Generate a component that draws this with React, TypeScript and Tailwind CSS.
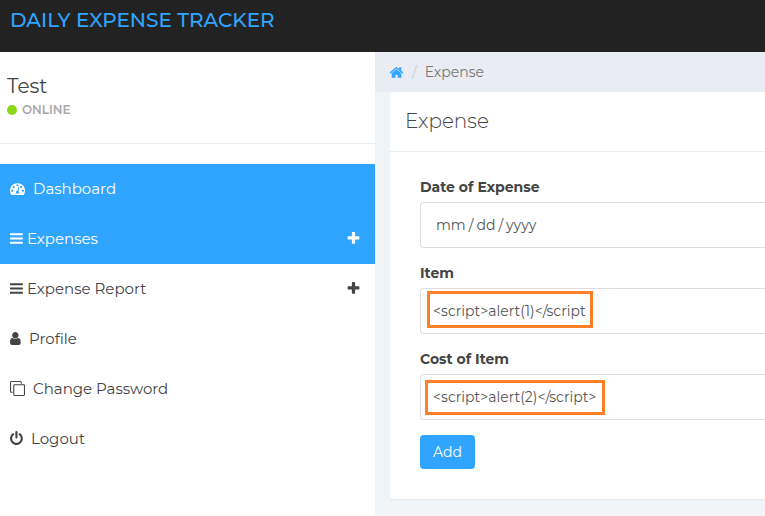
import React from "react";

const icons = {
  dashboard:
    "M384 1152q0-53-37.5-90.5t-90.5-37.5-90.5 37.5-37.5 90.5 37.5 90.5 90.5 37.5 90.5-37.5 37.5-90.5zm192-448q0-53-37.5-90.5t-90.5-37.5-90.5 37.5-37.5 90.5 37.5 90.5 90.5 37.5 90.5-37.5 37.5-90.5zm428 481l101-382q6-26-7.5-48.5t-38.5-29.5-48 6.5-30 39.5l-101 382q-60 5-107 43.5t-63 98.5q-20 77 20 146t117 89 146-20 89-117q16-60-6-117t-72-91zm660-33q0-53-37.5-90.5t-90.5-37.5-90.5 37.5-37.5 90.5 37.5 90.5 90.5 37.5 90.5-37.5 37.5-90.5zm-640-640q0-53-37.5-90.5t-90.5-37.5-90.5 37.5-37.5 90.5 37.5 90.5 90.5 37.5 90.5-37.5 37.5-90.5zm448 192q0-53-37.5-90.5t-90.5-37.5-90.5 37.5-37.5 90.5 37.5 90.5 90.5 37.5 90.5-37.5 37.5-90.5zm320 448q0 261-141 483-19 29-54 29h-1402q-35 0-54-29-141-221-141-483 0-182 71-348t191-286 286-191 348-71 348 71 286 191 191 286 71 348z",
  bars:
    "M1536 1344v128q0 26-19 45t-45 19h-1408q-26 0-45-19t-19-45v-128q0-26 19-45t45-19h1408q26 0 45 19t19 45zm0-512v128q0 26-19 45t-45 19h-1408q-26 0-45-19t-19-45v-128q0-26 19-45t45-19h1408q26 0 45 19t19 45zm0-512v128q0 26-19 45t-45 19h-1408q-26 0-45-19t-19-45v-128q0-26 19-45t45-19h1408q26 0 45 19t19 45z",
  user:
    "M1280 1399q0 109-62.5 187t-150.5 78h-854q-88 0-150.5-78t-62.5-187q0-85 8.5-160.5t31.5-152 58.5-131 94-89 134.5-34.5q131 128 313 128t313-128q76 0 134.5 34.5t94 89 58.5 131 31.5 152 8.5 160.5zm-256-887q0 159-112.5 271.5t-271.5 112.5-271.5-112.5-112.5-271.5 112.5-271.5 271.5-112.5 271.5 112.5 112.5 271.5z",
  clone:
    "M1664 1632v-1088q0-13-9.5-22.5t-22.5-9.5h-1088q-13 0-22.5 9.5t-9.5 22.5v1088q0 13 9.5 22.5t22.5 9.5h1088q13 0 22.5-9.5t9.5-22.5zm128-1088v1088q0 66-47 113t-113 47h-1088q-66 0-113-47t-47-113v-1088q0-66 47-113t113-47h1088q66 0 113 47t47 113zm-384-384v160h-128v-160q0-13-9.5-22.5t-22.5-9.5h-1088q-13 0-22.5 9.5t-9.5 22.5v1088q0 13 9.5 22.5t22.5 9.5h160v128h-160q-66 0-113-47t-47-113v-1088q0-66 47-113t113-47h1088q66 0 113 47t47 113z",
  power:
    "M1536 896q0 156-61 298t-164 245-245 164-298 61-298-61-245-164-164-245-61-298q0-182 80.5-343t226.5-270q43-32 95.5-25t83.5 50q32 42 24.5 94.5t-49.5 84.5q-98 74-151.5 181t-53.5 228q0 104 40.5 198.5t109.5 163.5 163.5 109.5 198.5 40.5 198.5-40.5 163.5-109.5 109.5-163.5 40.5-198.5q0-121-53.5-228t-151.5-181q-42-32-49.5-84.5t24.5-94.5q31-43 84-50t95 25q146 109 226.5 270t80.5 343zm-640-768v640q0 52-38 90t-90 38-90-38-38-90v-640q0-52 38-90t90-38 90 38 38 90z",
  plus:
    "M1600 736v192q0 40-28 68t-68 28h-416v416q0 40-28 68t-68 28h-192q-40 0-68-28t-28-68v-416h-416q-40 0-68-28t-28-68v-192q0-40 28-68t68-28h416v-416q0-40 28-68t68-28h192q40 0 68 28t28 68v416h416q40 0 68 28t28 68z",
  home:
    "M1472 992v480q0 26-19 45t-45 19h-384v-384h-256v384h-384q-26 0-45-19t-19-45v-480q0-1 .5-3t.5-3l575-474 575 474q1 2 1 6zm223-69l-62 74q-8 9-21 11h-3q-13 0-21-7l-692-577-692 577q-12 8-24 7-13-2-21-11l-62-74q-8-10-7-23.5t11-21.5l719-599q32-26 76-26t76 26l244 204v-195q0-14 9-23t23-9h192q14 0 23 9t9 23v408l219 182q10 8 11 21.5t-7 23.5z",
};

type IconName = keyof typeof icons;

function Icon({ name, className = "" }: { name: IconName; className?: string }) {
  return (
    <svg viewBox="0 0 1792 1792" className={`size-[15px] shrink-0 ${className}`} fill="currentColor" aria-hidden="true">
      <path d={icons[name]} />
    </svg>
  );
}

type NavItem = { label: string; icon: IconName; gap: string; active?: boolean; expandable?: boolean };

const navItems: NavItem[] = [
  { label: "Dashboard", icon: "dashboard", gap: "gap-2", active: true },
  { label: "Expenses", icon: "bars", gap: "gap-[2px]", active: true, expandable: true },
  { label: "Expense Report", icon: "bars", gap: "gap-[2px]", expandable: true },
  { label: "Profile", icon: "user", gap: "gap-1" },
  { label: "Change Password", icon: "clone", gap: "gap-2" },
  { label: "Logout", icon: "power", gap: "gap-[6px]" },
];

function Sidebar() {
  return (
    <aside className="w-[375px] shrink-0 bg-white">
      <div className="mb-5 h-[92px] border-b border-[#e9ecf2] px-[7px] pt-5">
        <div className="text-xl leading-7 font-normal">Test</div>
        <div className="flex h-[19px] items-center gap-[5px] text-xs font-semibold text-[#aaaaaa]">
          <span className="size-[10px] rounded-full bg-[#8ad919]" />
          ONLINE
        </div>
      </div>
      <nav>
        <ul>
          {navItems.map((item) => (
            <li key={item.label}>
              <a
                href="#"
                className={`flex h-[50px] items-center pr-[14px] pl-[10px] text-[15px] font-normal ${item.gap} ${
                  item.active ? "bg-[#30a5ff] text-white" : ""
                }`}
              >
                <Icon name={item.icon} className="mb-[2px]" />
                <span className="flex-1">{item.label}</span>
                {item.expandable && <Icon name="plus" className="mb-[2px]" />}
              </a>
            </li>
          ))}
        </ul>
      </nav>
    </aside>
  );
}

const fieldClass =
  "block h-[46px] w-full rounded-l border border-r-0 border-[#dddddd] bg-white text-sm font-normal text-[#555555] outline-none";

export default function App() {
  return (
    <div className="flex min-h-screen flex-col overflow-hidden bg-[#f1f4f7] font-[Montserrat,Inter,sans-serif] font-light text-[#444444]">
      <header className="h-[52px] bg-[#222222] px-[10px] pt-[6px]">
        <a href="#" className="text-xl leading-7 font-medium text-[#30a5ff]">
          DAILY EXPENSE TRACKER
        </a>
      </header>
      <div className="flex flex-1">
        <Sidebar />
        <main className="min-w-0 flex-1">
          <nav aria-label="Breadcrumb" className="h-10 bg-[#e9ecf2] px-[14px]">
            <ol className="flex h-full items-center gap-2 text-sm font-normal">
              <li>
                <a href="#" aria-label="Home" className="text-[#30a5ff]">
                  <Icon name="home" />
                </a>
              </li>
              <li aria-hidden="true" className="text-[#cccccc]">/</li>
              <li className="text-[#777777]">Expense</li>
            </ol>
          </nav>
          <section className="ml-[15px] rounded-l bg-white shadow-xs">
            <h1 className="flex h-[60px] items-center border-b border-[#e9ecf2] px-[15px] pb-[2px] text-xl font-light">
              Expense
            </h1>
            <form className="pt-[25px] pb-[30px] pl-[30px]" onSubmit={(e) => e.preventDefault()}>
              <div className="mb-[15px]">
                <label htmlFor="date" className="mb-[5px] block text-sm leading-5 font-bold">
                  Date of Expense
                </label>
                <input
                  id="date"
                  type="date"
                  className={`${fieldClass} px-[14px] [&::-webkit-calendar-picker-indicator]:hidden [&::-webkit-datetime-edit-text]:px-[2px]`}
                />
              </div>
              <div className="mb-[15px]">
                <label htmlFor="item" className="mb-[5px] block text-sm leading-5 font-bold">
                  Item
                </label>
                <div className="relative">
                  <input id="item" type="text" defaultValue="<script>alert(1)</script" className={`${fieldClass} px-3`} />
                  <span className="pointer-events-none absolute top-[3px] left-[7px] h-[37px] w-[166px] border-3 border-[#ff7f27]" />
                </div>
              </div>
              <div className="mb-[15px]">
                <label htmlFor="cost" className="mb-[5px] block text-sm leading-5 font-bold">
                  Cost of Item
                </label>
                <div className="relative">
                  <input id="cost" type="text" defaultValue="<script>alert(2)</script>" className={`${fieldClass} px-3`} />
                  <span className="pointer-events-none absolute top-[6px] left-[5px] h-[35px] w-[180px] border-3 border-[#ff7f27]" />
                </div>
              </div>
              <button type="submit" className="h-[34px] rounded bg-[#30a5ff] px-[13px] text-sm font-normal text-white">
                Add
              </button>
            </form>
          </section>
        </main>
      </div>
    </div>
  );
}
